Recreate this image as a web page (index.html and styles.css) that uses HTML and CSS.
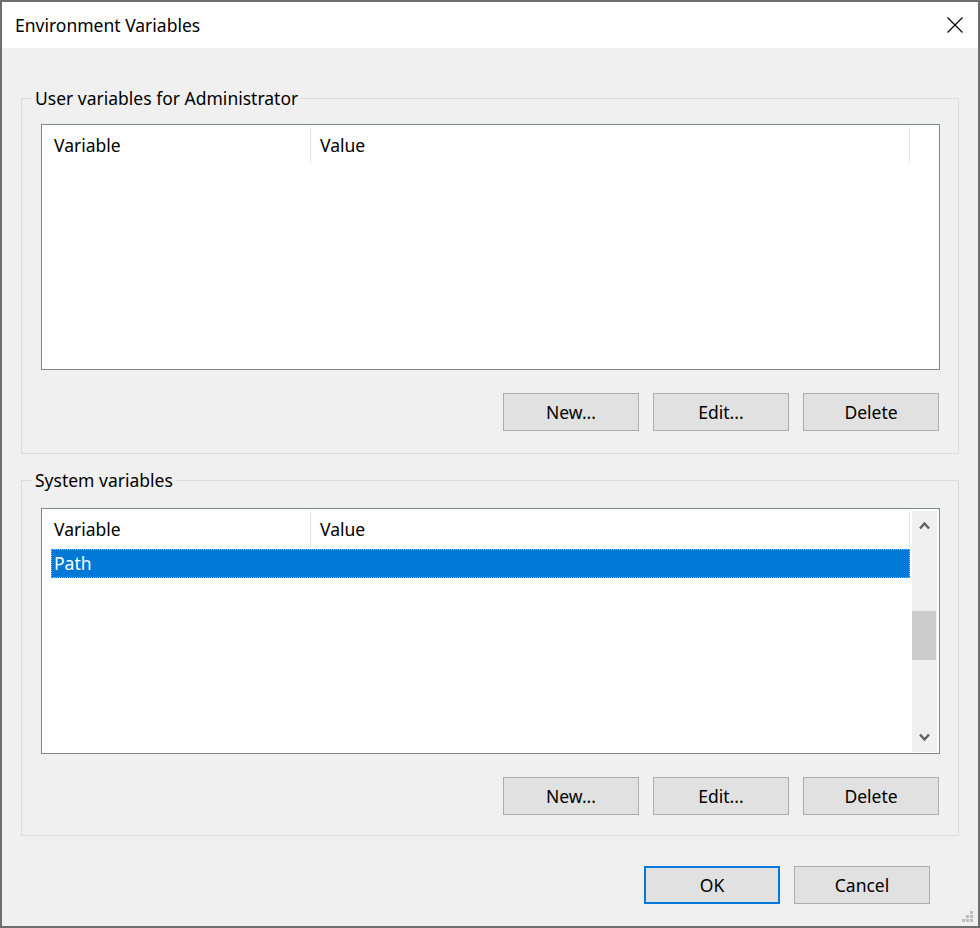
FILE: index.html
```html
<!DOCTYPE html>
<html lang="en">
<head>
<meta charset="utf-8">
<title>Environment Variables</title>
<link rel="stylesheet" href="styles.css">
</head>
<body>
<div class="window">
  <div class="titlebar">
    <span class="title">Environment Variables</span>
    <span class="close" aria-label="Close">
      <svg width="16" height="16" viewBox="0 0 16 16"><path d="M0.5 0.5 L15.5 15.5 M15.5 0.5 L0.5 15.5" stroke="#000" stroke-width="1.2" fill="none"/></svg>
    </span>
  </div>
  <div class="main">
    <fieldset class="group group-user">
      <legend>User variables for Administrator</legend>
      <div class="group-body">
        <div class="list">
          <div class="list-body">
            <div class="list-header">
              <div class="col col-var">Variable</div>
              <div class="col col-val">Value</div>
            </div>
          </div>
        </div>
        <div class="btn-row">
          <button class="btn">New...</button>
          <button class="btn">Edit...</button>
          <button class="btn">Delete</button>
        </div>
      </div>
    </fieldset>
    <fieldset class="group group-system">
      <legend>System variables</legend>
      <div class="group-body">
        <div class="list">
          <div class="list-body">
            <div class="list-header">
              <div class="col col-var">Variable</div>
              <div class="col col-val">Value</div>
            </div>
            <div class="row selected">Path</div>
          </div>
          <div class="scrollbar">
            <div class="sb-btn">
              <svg width="11" height="9" viewBox="0 0 11 9"><path d="M1 7.5 L5.5 2.5 L10 7.5" stroke="#606060" stroke-width="2.4" fill="none"/></svg>
            </div>
            <div class="sb-track"><div class="sb-thumb"></div></div>
            <div class="sb-btn">
              <svg width="11" height="9" viewBox="0 0 11 9"><path d="M1 1.5 L5.5 6.5 L10 1.5" stroke="#606060" stroke-width="2.4" fill="none"/></svg>
            </div>
          </div>
        </div>
        <div class="btn-row">
          <button class="btn">New...</button>
          <button class="btn">Edit...</button>
          <button class="btn">Delete</button>
        </div>
      </div>
    </fieldset>
    <div class="footer">
      <button class="btn btn-default">OK</button>
      <button class="btn">Cancel</button>
    </div>
  </div>
  <svg class="grip" width="11" height="11" viewBox="0 0 11 11">
    <rect x="8" y="0" width="3" height="3" fill="#bdbdbd"/>
    <rect x="4" y="4" width="3" height="3" fill="#bdbdbd"/>
    <rect x="8" y="4" width="3" height="3" fill="#bdbdbd"/>
    <rect x="0" y="8" width="3" height="3" fill="#bdbdbd"/>
    <rect x="4" y="8" width="3" height="3" fill="#bdbdbd"/>
    <rect x="8" y="8" width="3" height="3" fill="#bdbdbd"/>
  </svg>
</div>
</body>
</html>
```
FILE: styles.css
```css
* { box-sizing: border-box; }
html, body { margin: 0; padding: 0; }
body {
  font-family: "Segoe UI", "Noto Sans", "Open Sans", sans-serif;
  font-size: 17.5px;
  color: #000;
  background: #6e6e6e;
}
.window {
  position: relative;
  width: 980px;
  height: 928px;
  border: 2px solid #6e6e6e;
  display: flex;
  flex-direction: column;
  background: #f0f0f0;
}
.titlebar {
  height: 46px;
  background: #fff;
  display: flex;
  align-items: center;
  justify-content: space-between;
  padding: 0 15px 0 13px;
}
.title { line-height: 24px; }
.close { display: flex; width: 16px; height: 16px; }
.main {
  flex: 1;
  padding: 38px 19px 0 19px;
  display: flex;
  flex-direction: column;
}
.group {
  margin: 0;
  padding: 0;
  border: 1px solid #dcdcdc;
  min-width: 0;
}
.group legend {
  margin-left: 10px;
  padding: 0 3px;
  line-height: 24px;
}
.group-system { margin-top: 14px; }
.group-body { padding: 14px 18px 22px 19px; }
.group-system .group-body { padding-top: 16px; padding-bottom: 20px; }
.list {
  height: 246px;
  border: 1px solid #828790;
  background: #fff;
  display: flex;
  padding: 2px 2px 1px 0;
}
.list-body { flex: 1; min-width: 0; }
.list-header { display: flex; height: 36px; }
.col {
  height: 36px;
  line-height: 36px;
  border-right: 1px solid #e5e5e5;
  white-space: nowrap;
}
.col-var { width: 269px; padding-left: 12px; }
.col-val { width: 599px; padding-left: 9px; }
.row {
  margin: 2px 0 0 9px;
  width: 859px;
  height: 29px;
  line-height: 27px;
  padding-left: 2px;
}
.row.selected {
  background: #0078d7;
  color: #fff;
  border: 1px dotted #f2a07c;
}
.scrollbar {
  width: 25px;
  margin-left: 2px;
  background: #f0f0f0;
  display: flex;
  flex-direction: column;
}
.sb-btn {
  height: 29px;
  display: flex;
  align-items: center;
  justify-content: center;
}
.sb-track { flex: 1; padding-top: 71px; }
.sb-thumb { width: 24px; height: 49px; background: #cdcdcd; }
.btn-row {
  display: flex;
  justify-content: flex-end;
  gap: 14px;
  margin-top: 23px;
  padding-right: 1px;
}
.btn {
  width: 136px;
  height: 38px;
  background: #e1e1e1;
  border: 1px solid #adadad;
  font: inherit;
  color: #000;
  padding: 0;
  margin: 0;
}
.btn-default { border: 2px solid #0078d7; }
.footer {
  display: flex;
  justify-content: flex-end;
  gap: 14px;
  margin-top: 30px;
  padding-right: 29px;
}
.grip {
  position: absolute;
  right: 5px;
  bottom: 4px;
}
```
